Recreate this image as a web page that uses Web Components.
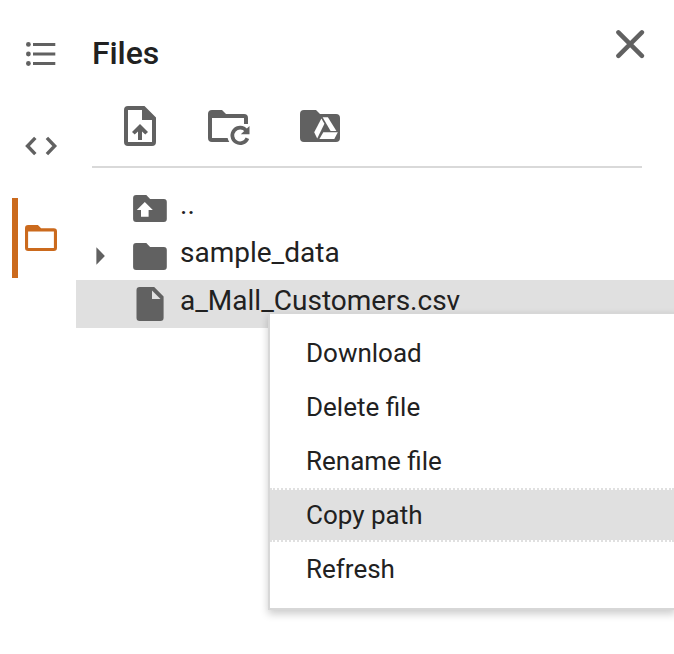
<!DOCTYPE html>
<html lang="en">
<head>
<meta charset="utf-8">
<title>Files</title>
<style>
html,body{margin:0;height:100%;overflow:hidden;background:#fff}
body{font-family:Roboto,"Liberation Sans",sans-serif;color:#212121}
</style>
</head>
<body>
<files-app></files-app>
<script>
const define = (name, html) => customElements.define(name, class extends HTMLElement {
  constructor() {
    super();
    const t = document.createElement('template');
    t.innerHTML = html;
    this.attachShadow({mode: 'open'}).append(t.content.cloneNode(true));
  }
});

// Icon artwork: [width, height, viewBox, markup]
const FOLDER = '<path d="M136.3 194.5h10.2l3.8 3.8h13.7a3 3 0 0 1 3 3v17a3 3 0 0 1-3 3h-27.700a3 3 0 0 1-3-3v-20.800a3 3 0 0 1 3-3z"/>';
const ICONS = {
  toc: [34, 28, '24 40 34 28', '<circle cx="28.400" cy="44.400" r="2.400"/><circle cx="28.400" cy="54" r="2.400"/><circle cx="28.400" cy="63.500" r="2.400"/><path d="M33 43h22.300v3H33zM33 52.500h22.300v3H33zM33 62h22.300v3H33z"/>'],
  code: [34, 22, '24 135 34 22', '<path d="M35.300 137.800L27.500 146l7.800 8.200M46.900 137.800L54.700 146l-7.800 8.200" fill="none" stroke="currentColor" stroke-width="3.400"/>'],
  folder: [34, 28, '24 224 34 28', '<path fill-rule="evenodd" d="M28.200 225h9.700l3.200 3.200h12.700a3.200 3.200 0 0 1 3.200 3.200v16.400a3.200 3.200 0 0 1-3.200 3.200H28.200a3.200 3.200 0 0 1-3.200-3.200v-19.600a3.200 3.200 0 0 1 3.200-3.200zM28.100 231.400v16.500h25.800v-16.500z"/>'],
  upload: [32, 40, '124 106 32 40', '<path fill-rule="evenodd" d="M128 106h16.500L156 117.500V142a4 4 0 0 1-4 4h-24a4 4 0 0 1-4-4v-32a4 4 0 0 1 4-4zM128 110v32h24v-22h-10v-10z"/><path d="M140 124l8 8-2.700 2.600-3.300-3.200v8.600h-4v-8.600l-3.300 3.200-2.700-2.600z"/>'],
  refresh: [44, 38, '207 109 44 38', '<path d="M212 110h10l4 4h18a4 4 0 0 1 4 4v6h-4v-6h-32v20h15.600q.5 2.200 1.700 4H212a4 4 0 0 1-4-4v-24a4 4 0 0 1 4-4z"/><path d="M246.300 130.600A7.800 7.800 0 1 0 247.400 138.300" fill="none" stroke="currentColor" stroke-width="3.700"/><path d="M249.500 126v8.200h-8.700z"/>'],
  drive: [40, 32, '300 110 40 32', '<path d="M304 110h12l4 4h16a4 4 0 0 1 4 4v20a4 4 0 0 1-4 4h-32a4 4 0 0 1-4-4v-24a4 4 0 0 1 4-4z"/><g fill="#fff"><path d="M322.600 117.300h5.300l8.500 13.700h-5.800z"/><path d="M321.400 118.500l3 5.200-7.200 14.800-3-6.200z"/><path d="M323.300 132.200h14.500l-3.500 6.700h-14.900z"/></g><path d="M324.600 126.500l3 4.400h-5.200z"/>'],
  close: [30, 30, '615 29 30 30', '<path d="M618.400 32.300l23.500 23.500M641.900 32.300l-23.500 23.500" fill="none" stroke="currentColor" stroke-width="4.500" stroke-linecap="round"/>'],
  row: [34, 27, '133.200 194.400 34 27', FOLDER],
  parent: [34, 27, '133.200 194.400 34 27', FOLDER + '<path fill="#fff" d="M145 201.500l8 8h-4.200v6.700h-7.600v-6.700H137z"/>'],
  file: [28, 34, '136 287 28 34', '<path d="M139.700 287h14.500l9.400 9.500v21.300a3.200 3.200 0 0 1-3.200 3.200h-20.700a3.200 3.200 0 0 1-3.200-3.200v-27.600a3.200 3.200 0 0 1 3.200-3.200z"/><path fill="#e0e0e0" d="M152 290.500v8.500h8.500z"/>'],
  arrow: [9, 18, '96 247 9 18', '<path d="M96.400 247.300v17.400l8.500-8.700z"/>']
};
customElements.define('ui-icon', class extends HTMLElement {
  connectedCallback() {
    if (this.shadowRoot) return;
    const [w, h, box, art] = ICONS[this.getAttribute('name')];
    this.attachShadow({mode: 'open'}).innerHTML =
      `<style>:host{display:block;flex:none;width:${w}px;height:${h}px}svg{display:block;fill:currentColor}</style>
       <svg width="${w}" height="${h}" viewBox="${box}" aria-hidden="true">${art}</svg>`;
  }
});

define('rail-tab', `<style>
:host{display:flex;align-items:center;box-sizing:border-box;height:80px;padding-left:6px;border-left:6px solid transparent;color:#616161}
:host([active]){border-color:#cb6a1d;color:#cb6a1d}
</style><slot></slot>`);

define('side-rail', `<style>
:host{display:flex;flex-direction:column;gap:12px;box-sizing:border-box;flex:none;width:76px;padding:14px 0 0 12px}
</style>
<rail-tab><ui-icon name="toc"></ui-icon></rail-tab>
<rail-tab><ui-icon name="code"></ui-icon></rail-tab>
<rail-tab active><ui-icon name="folder"></ui-icon></rail-tab>`);

define('panel-header', `<style>
:host{display:flex;justify-content:space-between;box-sizing:border-box;height:92px;padding:29px 29px 0 16px}
h1{margin:5px 0 0;font-size:32px;font-weight:500;line-height:38px;letter-spacing:-.1px}
ui-icon{color:#616161}
</style><h1><slot></slot></h1><ui-icon name="close"></ui-icon>`);

define('file-toolbar', `<style>
:host{display:flex;align-items:flex-start;box-sizing:border-box;height:76px;margin:0 32px 0 16px;padding:14px 0 0 32px;border-bottom:2px solid #d9d9d9;color:#616161}
.refresh{margin:3px 0 0 51px}.drive{margin:4px 0 0 49px}
</style>
<ui-icon name="upload"></ui-icon><ui-icon class="refresh" name="refresh"></ui-icon><ui-icon class="drive" name="drive"></ui-icon>`);

define('file-row', `<style>
:host{display:flex;height:48px;font-size:28px;line-height:42px;white-space:nowrap}
:host([selected]){background:#e0e0e0}
.toggle{display:flex;flex:none;width:37px;padding:15px 0 0 20px;color:#616161}
.icon{display:flex;flex:none;justify-content:center;width:34px;margin-right:13px;padding-top:var(--icon-top,10.500px);color:#616161}
</style><div class="toggle"><slot name="toggle"></slot></div><div class="icon"><slot name="icon"></slot></div><span><slot></slot></span>`);

define('file-list', `<style>
:host{display:block;padding-top:16px}
.file{--icon-top:7px}
</style>
<file-row><ui-icon slot="icon" name="parent"></ui-icon>..</file-row>
<file-row><ui-icon slot="toggle" name="arrow"></ui-icon><ui-icon slot="icon" name="row"></ui-icon>sample_data</file-row>
<file-row class="file" selected><ui-icon slot="icon" name="file"></ui-icon>a_Mall_Customers.csv</file-row>`);

define('menu-item', `<style>
:host{display:block;box-sizing:border-box;height:54px;padding-left:36px;border:dotted transparent;border-width:2px 0;font-size:26px;line-height:50px;white-space:nowrap}
:host([active]){background:#e0e0e0 padding-box;border-color:#e0e0e0}
</style><slot></slot>`);

define('context-menu', `<style>
:host{display:block;position:absolute;left:268px;top:312px;box-sizing:border-box;width:408px;padding:12px 0;background:#fff;border:2px solid #d7d7d7;box-shadow:0 4px 8px rgba(0,0,0,.2)}
</style><slot></slot>`);

define('files-app', `<style>
:host{display:flex;position:relative;width:100%;height:100%;overflow:hidden}
main{flex:1;min-width:0}
</style>
<side-rail></side-rail>
<main><panel-header>Files</panel-header><file-toolbar></file-toolbar><file-list></file-list></main>
<context-menu>
<menu-item>Download</menu-item><menu-item>Delete file</menu-item><menu-item>Rename file</menu-item><menu-item active>Copy path</menu-item><menu-item>Refresh</menu-item>
</context-menu>`);
</script>
</body>
</html>
